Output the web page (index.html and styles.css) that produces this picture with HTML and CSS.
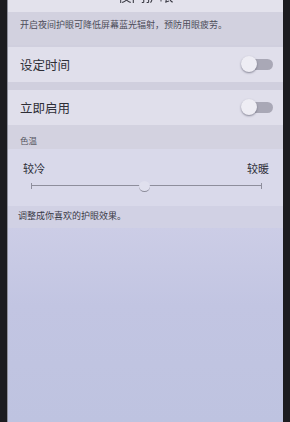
FILE: index.html
```html
<!DOCTYPE html>
<html lang="zh">
<head>
<meta charset="utf-8">
<link rel="stylesheet" href="styles.css">
</head>
<body>
<div class="phone">
  <div class="screen">
    <div class="titlebar"><span class="title">夜间护眼</span></div>
    <div class="desc">开启夜间护眼可降低屏幕蓝光辐射，预防用眼疲劳。</div>
    <div class="row row-first">
      <span class="label">设定时间</span>
      <span class="switch"><span class="knob"></span></span>
    </div>
    <div class="row row-second">
      <span class="label">立即启用</span>
      <span class="switch"><span class="knob"></span></span>
    </div>
    <div class="section">色温</div>
    <div class="slider-card">
      <div class="ends"><span>较冷</span><span>较暖</span></div>
      <div class="track">
        <span class="tick"></span>
        <span class="line"></span>
        <span class="tick"></span>
        <span class="thumb"></span>
      </div>
    </div>
    <div class="note">调整成你喜欢的护眼效果。</div>
    <div class="rest"></div>
  </div>
</div>
</body>
</html>
```
FILE: styles.css
```css
html, body {
  margin: 0;
  padding: 0;
  width: 290px;
  height: 422px;
  overflow: hidden;
  background: #1c1c20;
  font-family: "Noto Sans CJK SC", "Noto Sans", sans-serif;
}
.phone {
  display: flex;
  height: 422px;
  padding: 0 7px 0 7px;
  box-sizing: border-box;
}
.screen {
  flex: 1;
  display: flex;
  flex-direction: column;
  background: #d0cfde;
  border-left: 1px solid #8e8f9c;
  overflow: hidden;
}
.titlebar {
  height: 12px;
  background: #e3e2ec;
  display: flex;
  justify-content: center;
  overflow: hidden;
}
.title {
  font-size: 14px;
  line-height: 14px;
  margin-top: -12px;
  color: #3a3a44;
  filter: blur(0.6px);
}
.desc {
  height: 33px;
  box-sizing: border-box;
  padding: 7px 0 0 12px;
  font-size: 9px;
  line-height: 12px;
  color: #4c4c58;
  background: #d2d1df;
}
.row {
  height: 35px;
  display: flex;
  align-items: center;
  justify-content: space-between;
  padding: 0 10px 0 12px;
  background: #e0dfeb;
}
.row-first {
  margin-top: 2px;
}
.row-second {
  margin-top: 8px;
}
.label {
  font-size: 12.5px;
  color: #2e2e36;
}
.switch {
  position: relative;
  width: 32px;
  height: 11px;
  display: flex;
  justify-content: flex-end;
}
.switch::before {
  content: "";
  width: 24px;
  height: 11px;
  border-radius: 6px;
  background: #a9a8b6;
}
.knob {
  position: absolute;
  left: 0;
  top: -3px;
  width: 16px;
  height: 16px;
  border-radius: 50%;
  background: #eeedf4;
  box-shadow: 0 1px 2px rgba(60, 60, 80, 0.55);
}
.section {
  height: 24px;
  box-sizing: border-box;
  padding: 10px 0 0 12px;
  font-size: 8.5px;
  line-height: 11px;
  color: #55555f;
  background: #d3d2e0;
}
.slider-card {
  height: 57px;
  box-sizing: border-box;
  padding: 12px 14px 0 15px;
  background: #d9d9ea;
}
.ends {
  display: flex;
  justify-content: space-between;
  font-size: 11px;
  line-height: 14px;
  color: #2e2e38;
}
.track {
  position: relative;
  display: flex;
  align-items: center;
  margin: 6px 7px 0 8px;
  height: 9px;
}
.line {
  flex: 1;
  height: 1px;
  background: #8e8e9c;
}
.tick {
  width: 1px;
  height: 6px;
  background: #8e8e9c;
}
.thumb {
  position: absolute;
  left: 108px;
  top: 0;
  width: 11px;
  height: 11px;
  border-radius: 50%;
  background: #e0e0ee;
  border-bottom: 1.5px solid #8c8c9a;
  box-sizing: border-box;
}
.note {
  height: 22px;
  box-sizing: border-box;
  padding: 4px 0 0 10px;
  font-size: 9px;
  line-height: 12px;
  color: #3a3a46;
  background: #d1d1e4;
}
.rest {
  flex: 1;
  background: linear-gradient(180deg, #cccde6 0%, #c2c5e2 40%, #bec3e0 100%);
}
```
